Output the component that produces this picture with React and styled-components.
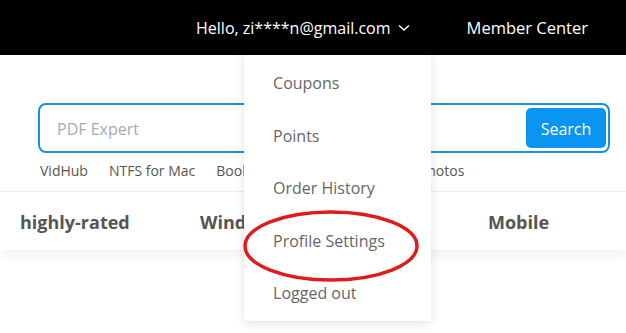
import styled, { createGlobalStyle } from 'styled-components';

const GlobalStyle = createGlobalStyle`
  body {
    margin: 0;
    background: #fff;
    font-family: "Open Sans", "Noto Sans", sans-serif;
  }
`;

const Page = styled.div`
  width: 626px;
  height: 333px;
  overflow: hidden;
  position: relative;
`;

const TopBar = styled.header`
  height: 55px;
  background: #000;
  display: flex;
  justify-content: flex-end;
  align-items: center;
  padding-right: 38px;
  gap: 57px;
  color: #fff;
  font-size: 16px;
`;

const UserMenu = styled.div`
  position: relative;
  display: flex;
  align-items: center;
  gap: 7px;
  height: 100%;
`;

const MemberLink = styled.span`
  font-size: 16.5px;
`;

const Chevron = styled.svg`
  width: 12px;
  height: 8px;
  margin-top: 1px;
`;

const Dropdown = styled.ul`
  position: absolute;
  top: 55px;
  left: 48px;
  width: 187px;
  margin: 0;
  padding: 3px 0 0;
  list-style: none;
  background: #fff;
  box-shadow: 0 2px 10px rgba(0, 0, 0, 0.12);
  z-index: 5;
`;

const DropItem = styled.li`
  height: 52.5px;
  line-height: 51px;
  padding-left: 29px;
  font-size: 16px;
  color: #666;
`;

const Ellipse = styled.svg`
  position: absolute;
  left: -3px;
  top: 153px;
  width: 180px;
  height: 76px;
  overflow: visible;
`;

const SearchArea = styled.section`
  padding: 48px 16px 0 38px;
`;

const SearchBox = styled.div`
  height: 44px;
  border: 2px solid #1a8fe9;
  border-radius: 8px;
  display: flex;
  align-items: center;
  padding: 2px 2px 0 17px;
`;

const SearchInput = styled.div`
  flex: 1;
  font-size: 16px;
  color: #a3abb9;
`;

const SearchButton = styled.button`
  width: 80px;
  height: 40px;
  margin-top: -2px;
  border: none;
  border-radius: 5px;
  background: #0a95f1;
  color: #fff;
  font-family: inherit;
  font-size: 16px;
  padding-top: 2px;
`;

const HotLinks = styled.div`
  display: flex;
  gap: 21px;
  padding: 8px 0 0 2px;
  font-size: 14px;
  color: #555;
`;

const NavBar = styled.nav`
  margin-top: 11px;
  height: 59px;
  border-top: 1px solid #ebebeb;
  display: flex;
  align-items: center;
  padding: 2px 0 0 20px;
  box-sizing: border-box;
  box-shadow: 0 6px 10px rgba(0, 0, 0, 0.05);
`;

const NavItem = styled.div`
  width: ${p => p.$w}px;
  font-size: 18px;
  font-weight: 700;
  color: #555;
`;

const links = ['VidHub', 'NTFS for Mac', 'BookReader', 'Mac Cleaner', 'Photos'];
const menu = ['Coupons', 'Points', 'Order History', 'Profile Settings', 'Logged out'];

export default function App() {
  return (
    <Page>
      <GlobalStyle />
      <TopBar>
        <UserMenu>
          Hello, zi****n@gmail.com
          <Chevron viewBox="0 0 12 8">
            <path d="M1 1.5 L6 6 L11 1.5" fill="none" stroke="#fff" strokeWidth="1.4" />
          </Chevron>
          <Dropdown>
            {menu.map(m => <DropItem key={m}>{m}</DropItem>)}
            <Ellipse viewBox="0 0 180 76">
              <ellipse cx="90" cy="38" rx="86" ry="34" fill="none" stroke="#e01b1b" strokeWidth="3.5" />
            </Ellipse>
          </Dropdown>
        </UserMenu>
        <MemberLink>Member Center</MemberLink>
      </TopBar>
      <SearchArea>
        <SearchBox>
          <SearchInput>PDF Expert</SearchInput>
          <SearchButton>Search</SearchButton>
        </SearchBox>
        <HotLinks>
          {links.map(l => <span key={l}>{l}</span>)}
        </HotLinks>
      </SearchArea>
      <NavBar>
        <NavItem $w={180}>highly-rated</NavItem>
        <NavItem $w={150}>Windows</NavItem>
        <NavItem $w={138}>Mac</NavItem>
        <NavItem $w={120}>Mobile</NavItem>
      </NavBar>
    </Page>
  );
}
